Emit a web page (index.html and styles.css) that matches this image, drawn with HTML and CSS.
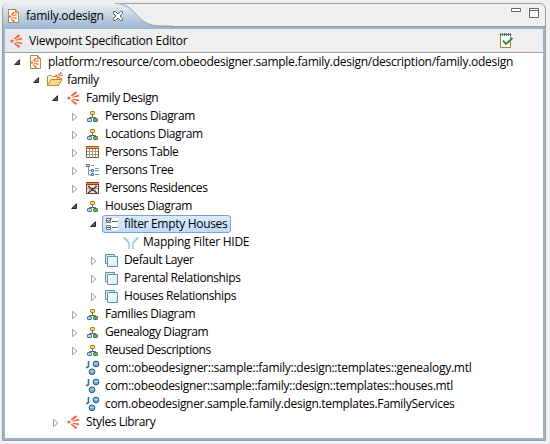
FILE: index.html
```html
<!DOCTYPE html>
<html lang="en">
<head>
<meta charset="utf-8">
<title>family.odesign</title>
<link rel="stylesheet" href="styles.css">
</head>
<body>
<svg class="sheet" width="0" height="0">
  <defs>
    <linearGradient id="tabfill" x1="0" y1="0" x2="0" y2="1"><stop offset="0" stop-color="#edf1f6"/><stop offset="1" stop-color="#99b4d1"/></linearGradient>
    <linearGradient id="blueglass" x1="0" y1="0" x2="1" y2="1"><stop offset="0" stop-color="#fff"/><stop offset="1" stop-color="#d0e9f5"/></linearGradient>
    <linearGradient id="funnelfill" x1="0" y1="0" x2="1" y2="0"><stop offset="0" stop-color="#b9dcee"/><stop offset=".5" stop-color="#fff"/><stop offset="1" stop-color="#b9dcee"/></linearGradient>
    <symbol id="open" viewBox="0 0 8 8"><path d="M6.500 1.700v4.800H1.700z" fill="#595959" stroke="#262626"/></symbol>
    <symbol id="closed" viewBox="0 0 8 10"><path d="M1.500 1.300v7.400L6 5z" fill="#fff" stroke="#a0a0a0"/></symbol>
    <symbol id="burst" viewBox="0 0 16 16"><g fill="#f1673c"><circle cx="3" cy="8" r="1.600"/><path d="M4.600 5.500 9.500 1.200 11.300 3 6 6.500zM6.300 7 12.700 4.500 13.200 6.600 6.700 7.800zM6.700 8.700l6.500.8-.6 2-6.200-1.900zM5.700 9.700l5.700 3.700-1.900 1.500-4.900-4.600z"/></g></symbol>
    <symbol id="file" viewBox="0 0 16 16"><path d="M2.500 1.500h7l3 3v10h-10z" fill="#fffdf2" stroke="#a98b4c"/><path d="M9.500 1.500v3h3z" fill="#e8cf91" stroke="#a98b4c"/><g fill="#f2673a"><circle cx="4" cy="8.600" r="1.200"/><path d="M4.700 6.900 7.500 3.500l1.400 1.200-3.300 2.700zM6 7.700l4.500-1.900.3 1.400-4.600 1.100zM6 9l4.800.6-.5 1.400-4.400-1.200zM5.200 10l3.900 2.900-1.500 1.300-2.900-3.500z"/></g></symbol>
    <symbol id="folder" viewBox="0 0 16 16"><path d="M.5 13.500v-9l1-1h3l1 1h5v3" fill="#fff2c8" stroke="#b98a3c"/><path d="M.5 13.500 4 7.500h11l-3.500 6z" fill="#fbd982" stroke="#b98a3c"/><g fill="#f2673a"><circle cx="9.300" cy="3.700" r="1.100"/><path d="m10.700 2.900 3-3 1.500 1-3.800 2.600zM12 3.600l3.800-1v1.300l-3.800.4zM11.300 4.600l3.800 2.100-.8 1.200-3.600-2.500z"/></g></symbol>
    <symbol id="diagram" viewBox="0 0 16 16"><path d="M7.500 7v2M4.500 11V9.500h6V11" fill="none" stroke="#52637e"/><rect x="5.500" y="3.500" width="4" height="3" rx=".7" fill="#fbd75e" stroke="#a96f1b"/><rect x="2.500" y="10.500" width="4" height="3" rx=".7" fill="#b9d4f1" stroke="#456195"/><rect x="8.500" y="10.500" width="4" height="3" rx=".7" fill="#65bd50" stroke="#346c37"/></symbol>
    <symbol id="table" viewBox="0 0 16 16"><path d="M1.500 2.500h12v11h-12z" fill="#fff" stroke="#77623f"/><path d="M1 2h13v3H1z" fill="#f4a04d"/><path d="M1 2.500h13M1 4.500h13" stroke="#b9541e"/><path d="M4.500 5v8M7.500 5v8M10.500 5v8M2 7.500h11M2 10.500h11" stroke="#a79b78"/></symbol>
    <symbol id="tree" viewBox="0 0 16 16"><path d="M3.500 4v9H7M4 8.500h3M6 3.500h3M10 8.500h4M10 12.500h4M10 6.500h4" fill="none" stroke="#7197bb"/><path d="M1.500 2.500h3v2h-3zM6.500 7.500h2v2h-2zM6.500 11.500h2v2h-2z" fill="#d7eaf8" stroke="#4773a1"/></symbol>
    <symbol id="cross" viewBox="0 0 16 16"><path d="M1.500 2.500h12v11h-12z" fill="#f6e8e4" stroke="#7b3a32"/><path d="M1 2h13v3H1z" fill="#f18b32"/><path d="M1 2.500h13M1 4.500h13" stroke="#a3351f"/><path d="M4.500 5v8M10.500 5v8M2 8.500h11" stroke="#b39c99"/><path d="m3 6 9 7M12 6l-9 7" stroke="#4b3544" stroke-width="1.200"/><path d="M6.500 8h2v3h-2z" fill="#4b3544"/></symbol>
    <symbol id="filter" viewBox="0 0 16 16"><path d="M1.500 1.500h13v13h-13z" fill="#fff" stroke="#d5e2ed"/><path d="M2.500 2.500h4v4h-4zM2.500 9.500h4v4h-4z" fill="#fff" stroke="#687078"/><path d="m3 4.300 1.500 1.400L7.500 2M3 11.500h3" fill="none" stroke="#444"/><path d="M8 5.500h6M8 11.500h6" stroke="#687078"/></symbol>
    <symbol id="funnel" viewBox="0 0 16 16"><path d="M.5 3.500h15L10 9v6L6.500 13V9z" fill="url(#funnelfill)"/><path d="m.5 3.500 5.500 5.500v6M15.500 3.500 10 9v6" fill="none" stroke="#8fbbd2" stroke-width="1.200"/></symbol>
    <symbol id="layer" viewBox="0 0 16 16"><path d="M1.500 2.500h9v9h-9z" fill="#d9edf6" stroke="#648b9f"/><path d="M3.500 4.500h10v10h-10z" fill="url(#blueglass)" stroke="#668fa7"/></symbol>
    <symbol id="java" viewBox="0 0 16 16"><path d="M3.500 1v5q0 1.500-2.500 1.500" fill="none" stroke="#24759d" stroke-width="1.600"/><circle cx="11" cy="4" r="2.900" fill="#71add1" stroke="#255d85"/><circle cx="7" cy="11.800" r="2.900" fill="#71add1" stroke="#255d85"/><path d="M9 3.500h4M5 11.300h4" stroke="#b3d9ec"/></symbol>
  </defs>
</svg>
<main class="editor">
  <header class="tabs">
    <svg class="tabshape" width="170" height="26"><path d="M0 26V6Q0 0 6 0h106c22 0 20 22 44 22.500V26z" fill="url(#tabfill)"/><path d="M112 .5c22 0 20 22 44 22.500h14" fill="none" stroke="#a0a0a0"/></svg>
    <svg class="icon tabicon"><use href="#file"/></svg>
    <span class="text tabname">family.odesign</span>
    <svg class="close" width="10" height="10" viewBox="0 0 10 10"><path d="M.5.5h2L5 3 7.500.5h2v2L7 5l2.500 2.500v2h-2L5 7 2.500 9.500h-2v-2L3 5 .5 2.500z" fill="#fff" stroke="#656565"/></svg>
    <svg class="window" width="28" height="10" viewBox="0 0 28 10"><path d="M.5.5h9v3h-9zM18.500.5h9v9h-9z" fill="#fff" stroke="#666"/><path d="M18.500 2.500h9" stroke="#666"/></svg>
  </header>
  <section class="body">
    <div class="heading"><svg class="icon"><use href="#burst"/></svg><span class="text title">Viewpoint Specification Editor</span>
      <svg class="check" width="16" height="16" viewBox="0 0 16 16"><path d="M2.500 1.500h10v13h-10z" fill="#fffdf0" stroke="#9b823e"/><path d="M2 1.500h11" stroke="#2c5078" stroke-width="2.500" stroke-dasharray="1 1"/><path d="m5 7.500 3 3.500 6.500-6" fill="none" stroke="#278453" stroke-width="1.800"/></svg>
    </div>
    <div class="tree">
      <div class="row l0"><svg class="arrow"><use href="#open"/></svg><svg class="icon"><use href="#file"/></svg><span class="text long">platform:/resource/com.obeodesigner.sample.family.design/description/family.odesign</span></div>
      <div class="row l1"><svg class="arrow"><use href="#open"/></svg><svg class="icon"><use href="#folder"/></svg><span class="text">family</span></div>
      <div class="row l2"><svg class="arrow"><use href="#open"/></svg><svg class="icon"><use href="#burst"/></svg><span class="text">Family Design</span></div>
      <div class="row l3"><svg class="arrow closed"><use href="#closed"/></svg><svg class="icon"><use href="#diagram"/></svg><span class="text">Persons Diagram</span></div>
      <div class="row l3"><svg class="arrow closed"><use href="#closed"/></svg><svg class="icon"><use href="#diagram"/></svg><span class="text">Locations Diagram</span></div>
      <div class="row l3"><svg class="arrow closed"><use href="#closed"/></svg><svg class="icon"><use href="#table"/></svg><span class="text">Persons Table</span></div>
      <div class="row l3"><svg class="arrow closed"><use href="#closed"/></svg><svg class="icon"><use href="#tree"/></svg><span class="text">Persons Tree</span></div>
      <div class="row l3"><svg class="arrow closed"><use href="#closed"/></svg><svg class="icon"><use href="#cross"/></svg><span class="text tight">Persons Residences</span></div>
      <div class="row l3"><svg class="arrow"><use href="#open"/></svg><svg class="icon"><use href="#diagram"/></svg><span class="text">Houses Diagram</span></div>
      <div class="row l4 selected"><svg class="arrow"><use href="#open"/></svg><div class="item"><svg class="icon"><use href="#filter"/></svg><span class="text service">filter Empty Houses</span></div></div>
      <div class="row l5"><svg class="arrow"></svg><svg class="icon"><use href="#funnel"/></svg><span class="text wide">Mapping Filter HIDE</span></div>
      <div class="row l4"><svg class="arrow closed"><use href="#closed"/></svg><svg class="icon"><use href="#layer"/></svg><span class="text">Default Layer</span></div>
      <div class="row l4"><svg class="arrow closed"><use href="#closed"/></svg><svg class="icon"><use href="#layer"/></svg><span class="text">Parental Relationships</span></div>
      <div class="row l4"><svg class="arrow closed"><use href="#closed"/></svg><svg class="icon"><use href="#layer"/></svg><span class="text">Houses Relationships</span></div>
      <div class="row l3"><svg class="arrow closed"><use href="#closed"/></svg><svg class="icon"><use href="#diagram"/></svg><span class="text">Families Diagram</span></div>
      <div class="row l3"><svg class="arrow closed"><use href="#closed"/></svg><svg class="icon"><use href="#diagram"/></svg><span class="text">Genealogy Diagram</span></div>
      <div class="row l3"><svg class="arrow closed"><use href="#closed"/></svg><svg class="icon"><use href="#diagram"/></svg><span class="text tight">Reused Descriptions</span></div>
      <div class="row l3"><svg class="arrow"></svg><svg class="icon"><use href="#java"/></svg><span class="text long">com::obeodesigner::sample::family::design::templates::genealogy.mtl</span></div>
      <div class="row l3"><svg class="arrow"></svg><svg class="icon"><use href="#java"/></svg><span class="text service">com::obeodesigner::sample::family::design::templates::houses.mtl</span></div>
      <div class="row l3"><svg class="arrow"></svg><svg class="icon"><use href="#java"/></svg><span class="text service">com.obeodesigner.sample.family.design.templates.FamilyServices</span></div>
      <div class="row l2"><svg class="arrow closed"><use href="#closed"/></svg><svg class="icon"><use href="#burst"/></svg><span class="text">Styles Library</span></div>
    </div>
  </section>
</main>
</body>
</html>
```
FILE: styles.css
```css
* { box-sizing: border-box; }
body { margin: 0; padding: 3px 4px 3px 2px; width: 550px; height: 444px; overflow: hidden; background: #f0f0f0; color: #000; font: 12px/18px "Open Sans", sans-serif; }
svg { display: block; flex: none; }
.sheet { position: absolute; }
.editor { width: 544px; height: 438px; border: 1px solid #a0a0a0; border-radius: 6px 6px 0 0; }
.tabs { position: relative; display: flex; align-items: center; height: 23px; padding: 2px 5px 0 3px; border-bottom: 1px solid #a0a0a0; }
.tabshape { position: absolute; left: 0; top: -1px; }
.tabicon { position: relative; }
.text { white-space: pre; letter-spacing: -.38px; }
.tabname { position: relative; margin-left: 4px; letter-spacing: -.24px; }
.close { position: relative; margin-left: 9px; }
.window { margin: -6px 1px 0 auto; }
.body { height: 413px; border: 2px solid #99b4d1; background: #fff; }
.heading { display: flex; align-items: center; height: 24px; padding-left: 4px; background: linear-gradient(90deg, #e4e9ef, #efefef 50px); border-bottom: 1px solid #a0a0a0; }
.title { margin-left: 4px; letter-spacing: -.25px; }
.check { margin-left: auto; margin-right: 29px; }
.icon { width: 16px; height: 16px; }
.row { display: flex; align-items: center; height: 18px; }
.row .text { margin-left: 4px; }
.long { letter-spacing: -.265px; }
.service { letter-spacing: -.305px; }
.wide { letter-spacing: -.25px; }
.tight { letter-spacing: -.45px; }
.arrow { width: 8px; height: 8px; margin-right: 7px; }
.closed { height: 10px; margin: 2px 6px 0 1px; }
.l0 { padding-left: 8px; }
.l1 { padding-left: 27px; }
.l2 { padding-left: 46px; }
.l3 { padding-left: 65px; }
.l4 { padding-left: 84px; }
.l5 { padding-left: 103px; }
.item { display: flex; align-items: center; width: 129px; height: 18px; margin-left: -2px; padding-left: 1px; border: 1px solid #7da2ce; border-radius: 3px; background: linear-gradient(#dcebfc, #c1dbfc); }
```
